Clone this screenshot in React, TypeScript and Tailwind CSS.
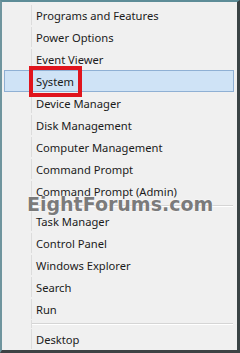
const items: (string | null)[] = [
  'Programs and Features',
  'Power Options',
  'Event Viewer',
  'System',
  'Device Manager',
  'Disk Management',
  'Computer Management',
  'Command Prompt',
  'Command Prompt (Admin)',
  null,
  'Task Manager',
  'Control Panel',
  'Windows Explorer',
  'Search',
  'Run',
  null,
  'Desktop',
];

const MenuRow = ({ label, active }: { label: string; active?: boolean }) => (
  <div
    className={
      active
        ? 'flex h-[22px] items-center ml-[2px] mr-[3px] border border-[#8fb0d4] bg-[#cfe3f6]'
        : 'flex h-[22px] items-center ml-[2px] mr-[3px] border border-transparent'
    }
  >
    <div
      className={
        active
          ? 'w-[27px] h-full border-r border-transparent'
          : 'w-[27px] h-full border-r border-[#dcdcdc]'
      }
    />
    <span className="pl-[4px] pt-px text-[11.2px] leading-none text-[#1b1b1b]">{label}</span>
  </div>
);

const Separator = () => (
  <div className="flex h-[8px] items-center">
    <div className="w-[30px] h-full border-r border-[#dcdcdc]" />
    <div className="flex-1 mr-[4px] border-t border-[#d5d5d5] border-b border-b-white" />
  </div>
);

export default function App() {
  return (
    <div
      className="relative w-[240px] h-[353px] overflow-hidden bg-[#f0f0f0] border-t-2 border-l-2 border-t-[#5d8c97] border-l-[#6f959e] border-r-[3px] border-b-[3px] border-r-[#3a4345] border-b-[#3d4244]"
      style={{ fontFamily: '"Noto Sans", "Open Sans", sans-serif' }}
    >
      <div className="flex flex-col pt-[2px]">
        {items.map((label, i) =>
          label === null ? (
            <Separator key={i} />
          ) : (
            <MenuRow key={i} label={label} active={label === 'System'} />
          )
        )}
      </div>

      <div className="absolute left-[27px] top-[64px] w-[53px] h-[31px] border-4 border-[#e0141d]" />

      <div
        className="absolute left-[25px] top-[193px] text-[19px] font-bold leading-none text-[#7b7b7b] [text-shadow:0_0_2px_#fff,0_0_1px_#fff]"
        style={{ fontFamily: '"DejaVu Sans", Verdana, sans-serif' }}
      >
        EightForums.com
      </div>
    </div>
  );
}
